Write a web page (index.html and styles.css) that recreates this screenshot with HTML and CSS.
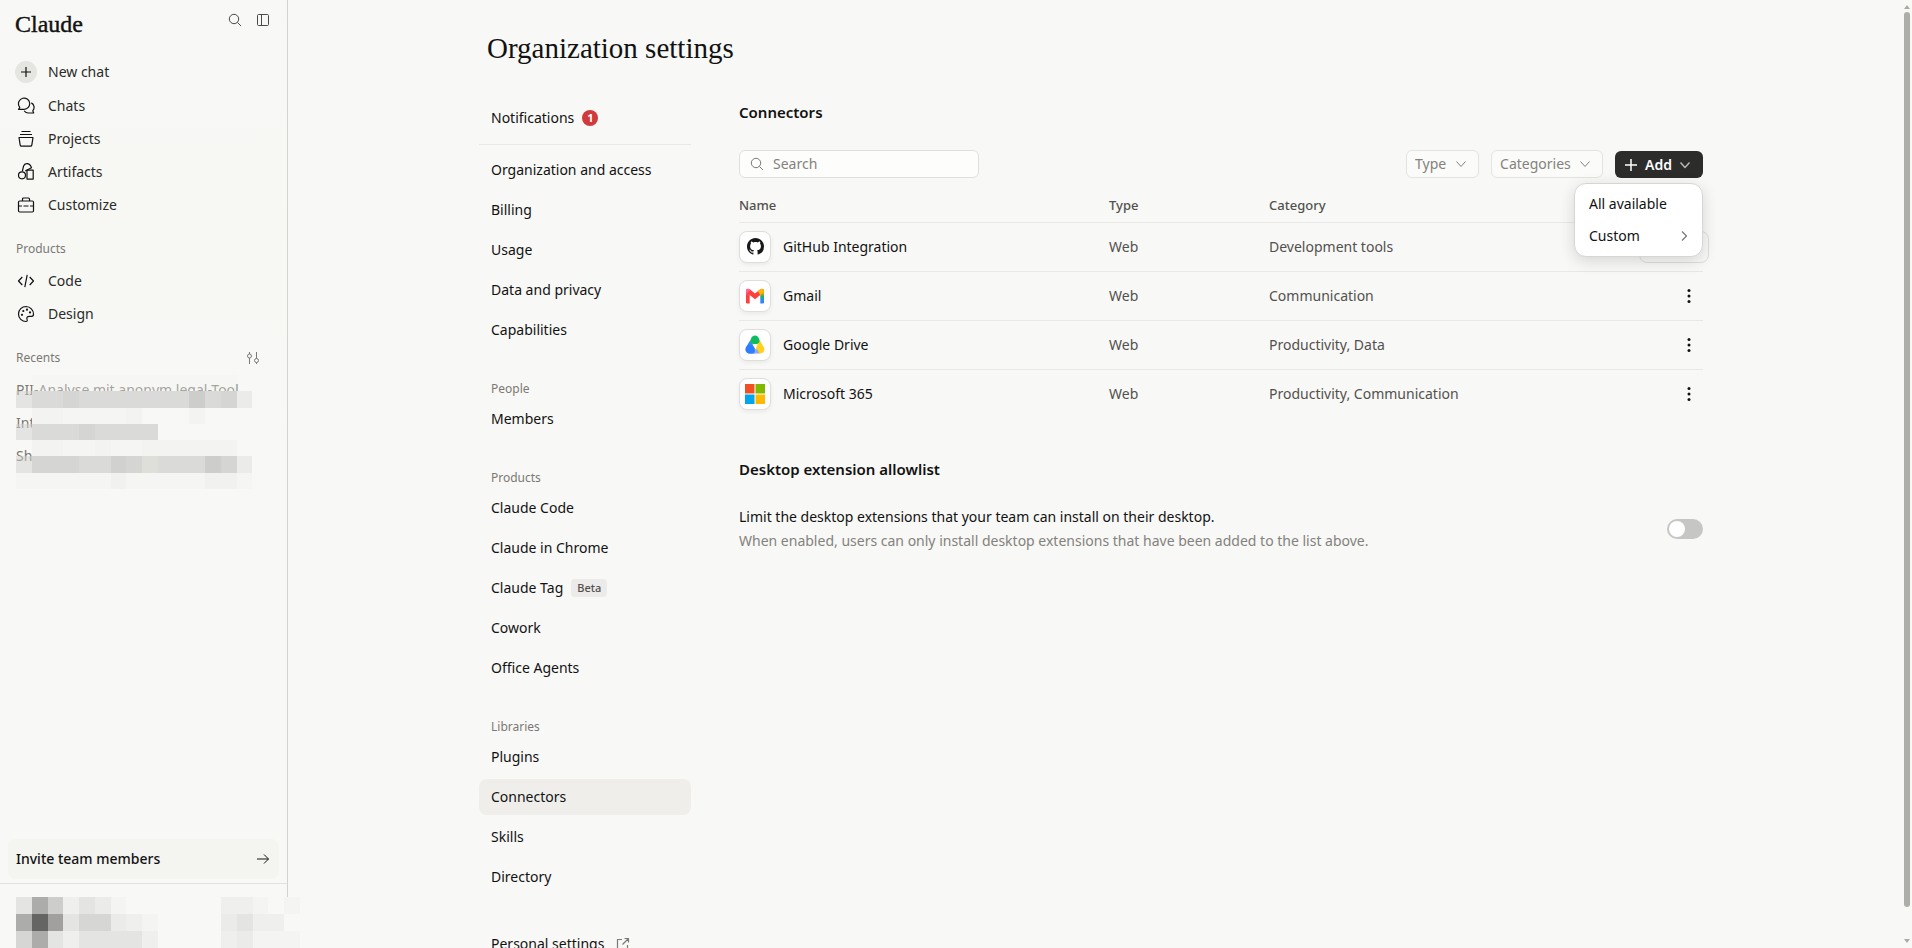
FILE: index.html
```html
<!DOCTYPE html>
<html lang="en">
<head>
  <meta charset="UTF-8" />
  <meta name="viewport" content="width=device-width, initial-scale=1.0" />
  <title>Organization settings - Claude</title>
  <link rel="stylesheet" href="styles.css">
</head>
<body>
  <div class="app">
    <aside class="sidebar">
      <div class="sidebar-main">
        <div class="sidebar-top">
          <a href="#" class="brand">Claude</a>
          <div class="top-actions">
            <button type="button" class="icon-btn" aria-label="Search">
              <svg width="14" height="14" viewBox="0 0 14 14"><circle cx="6" cy="6" r="4.7" /><path d="M9.4 9.4 13 13" /></svg>
            </button>
            <button type="button" class="icon-btn" aria-label="Toggle sidebar">
              <svg width="14" height="14" viewBox="0 0 14 14"><rect x="1.5" y="1.5" width="11" height="11" rx="1" /><path d="M5.5 1.5v11" /></svg>
            </button>
          </div>
        </div>

        <nav class="side-nav">
          <a href="#" class="new-chat">
            <span class="plus"><svg width="12" height="12" viewBox="0 0 12 12"><path d="M6 1v10M1 6h10" /></svg></span>
            New chat
          </a>
          <a href="#">
            <svg width="18" height="18" viewBox="0 0 18 18"><path d="M1.5 12.3h5.6a5.6 5.6 0 1 0-5.2-3.5l.9 1.700z" /><path d="M14.3 5.9a5 5 0 0 1 1.5 7.8l.9 2.3h-5a5 5 0 0 1-4.5-2.3" /></svg>
            Chats
          </a>
          <a href="#">
            <svg width="18" height="18" viewBox="0 0 18 18"><path d="M4.5 1.5h9M3 4.5h12M2 7.5h14l-1.2 7.7a1.2 1.2 0 0 1-1.2 1H4.4a1.2 1.2 0 0 1-1.2-1z" /></svg>
            Projects
          </a>
          <a href="#">
            <svg width="18" height="18" viewBox="0 0 18 18"><circle cx="5" cy="12.3" r="3.5" /><path d="M10 7.2h6.2v8.9H10z" /><path d="M5.3 8.4 6.6 3a3.8 3.8 0 0 1 6.9-.4l1 2.1L8.2 8" /></svg>
            Artifacts
          </a>
          <a href="#">
            <svg width="18" height="18" viewBox="0 0 18 18"><rect x="1.5" y="5" width="15" height="11" rx="1.2" /><path d="M5.5 5V3a1 1 0 0 1 1-1h5a1 1 0 0 1 1 1v2M1.5 10H5M6.500 10h5M13 10h3.500" /></svg>
            Customize
          </a>
        </nav>

        <h2 class="side-label">Products</h2>
        <nav class="side-nav">
          <a href="#">
            <svg width="18" height="18" viewBox="0 0 18 18"><path d="M5.300 5 1.500 9l3.800 4M12.700 5l3.800 4-3.800 4M10.200 2.800 7.800 15.200" /></svg>
            Code
          </a>
          <a href="#">
            <svg width="18" height="18" viewBox="0 0 18 18"><path d="M9 1.500a7.500 7.500 0 1 0 0 15c1.300 0 1.500-1 1-2.200-.6-1.700.4-3 2.200-3h2.500c1.200 0 1.800-.8 1.800-2A7.600 7.600 0 0 0 9 1.500z" /><g class="fill"><circle cx="5" cy="9.800" r="1.100" /><circle cx="6.300" cy="6" r="1.100" /><circle cx="10" cy="4.700" r="1.100" /><circle cx="13" cy="7.400" r="1.100" /></g></svg>
            Design
          </a>
        </nav>

        <div class="recents-head">
          <h2 class="side-label">Recents</h2>
          <button type="button" class="icon-btn muted" aria-label="Filter recents">
            <svg width="14" height="14" viewBox="0 0 14 14"><path d="M3.500 1v2M3.500 7v6M10.500 1v6.500M10.500 11.500v1.500" /><circle cx="3.500" cy="5" r="2" /><circle cx="10.500" cy="9.500" r="2" /></svg>
          </button>
        </div>
        <div class="recents">
          <a href="#">PII-Analyse mit anonym legal-Tool</a>
          <a href="#">Int</a>
          <a href="#">Sh</a>
          <svg class="mosaic" viewBox="0 0 16 7" preserveAspectRatio="none" aria-hidden="true">
            <path fill="#f3f3f1" fill-opacity=".35" d="M1 0h13v1H1z" />
            <path fill="#f3f3f1" d="M1 2h2v1H1zM7 2h1v1H7zM11 2h1v1h-1zM1 4h2v1H1zM5 4h1v1H5zM8 4h6v1H8z" />
            <path fill="#f1f1ef" d="M6 6h1v1H6zM12 6h2v1h-2z" />
            <path fill="#f5f5f3" d="M3 2h4v1H3zM3 4h2v1H3zM6 4h2v1H6zM0 6h6v1H0zM7 6h5v1H7zM14 6h1v1h-1z" />
            <path fill="#d0d0ce" fill-opacity=".5" d="M0 1h1v1H0zM0 3h1v1H0zM0 5h1v1H0z" />
            <path fill="#ebebe9" d="M14 1h1v1h-1zM14 5h1v1h-1z" />
            <path fill="#dadad8" d="M1 1h10v1H1zM12 1h1v1h-1zM1 3h8v1H1zM1 5h11v1H1z" />
            <path fill="#d5d5d3" d="M3 1h1v1H3zM13 1h1v1h-1zM4 3h1v1H4zM1 5h3v1H1zM7 5h1v1H7zM13 5h1v1h-1z" />
            <path fill="#cdcdcb" d="M11 1h1v1h-1zM12 5h1v1h-1z" />
            <path fill="#d1d1cf" d="M6 5h1v1H6z" />
            <path fill="#dedfd9" d="M8 5h1v1H8z" />
          </svg>
        </div>

        <a href="#" class="invite">
          Invite team members
          <svg width="14" height="14" viewBox="0 0 14 14"><path d="M1 7h11.500M8 2.500 12.500 7 8 11.500" /></svg>
        </a>
        <div class="side-divider"></div>
      </div>

      <div class="account">
        <svg viewBox="0 0 18 3" preserveAspectRatio="none" aria-hidden="true">
          <path fill="#f4f4f2" d="M6 0h1v1H6zM15 0h1v1h-1zM8 1h1v1H8zM15 2h3v1h-3zM17 0h1v1h-1z" />
          <path fill="#efefed" d="M3 0h1v1H3zM13 0h2v1h-2zM7 1h1v1H7zM15 1h2v1h-2zM3 2h1v1H3zM8 2h1v1H8zM13 2h1v1h-1z" />
          <path fill="#ebebe9" d="M5 0h1v1H5zM6 1h1v1H6zM13 1h1v1h-1zM14 2h1v1h-1z" />
          <path fill="#e4e4e2" d="M0 0h1v1H0zM4 0h1v1H4zM3 1h1v1H3zM14 1h1v1h-1zM2 2h1v1H2zM4 2h4v1H4z" />
          <path fill="#d6d6d4" d="M4 1h2v1H4zM0 2h1v1H0z" />
          <path fill="#cdcdcb" d="M2 0h1v1H2z" />
          <path fill="#acacaa" d="M1 0h1v1H1zM0 1h1v1H0zM1 2h1v1H1z" />
          <path fill="#a2a09e" d="M2 1h1v1H2z" />
          <path fill="#656563" d="M1 1h1v1H1z" />
        </svg>
      </div>
    </aside>

    <main class="page">
      <div class="container">
        <h1>Organization settings</h1>
        <div class="columns">
          <nav class="settings-nav">
            <a href="#">Notifications <span class="count">1</span></a>
            <hr>
            <a href="#">Organization and access</a>
            <a href="#">Billing</a>
            <a href="#">Usage</a>
            <a href="#">Data and privacy</a>
            <a href="#">Capabilities</a>
            <h2>People</h2>
            <a href="#">Members</a>
            <h2>Products</h2>
            <a href="#">Claude Code</a>
            <a href="#">Claude in Chrome</a>
            <a href="#">Claude Tag <span class="beta">Beta</span></a>
            <a href="#">Cowork</a>
            <a href="#">Office Agents</a>
            <h2>Libraries</h2>
            <a href="#">Plugins</a>
            <a href="#" class="active" aria-current="page">Connectors</a>
            <a href="#">Skills</a>
            <a href="#">Directory</a>
            <a href="#" class="personal">
              Personal settings
              <svg width="14" height="14" viewBox="0 0 14 14"><path d="M6 2.500H1.500v10h10V8M8.500 1.500h4v4M12.500 1.500 6.500 7.500" /></svg>
            </a>
          </nav>

          <section class="panel">
            <h2>Connectors</h2>
            <div class="toolbar">
              <div class="search">
                <svg width="14" height="14" viewBox="0 0 14 14"><circle cx="6" cy="6" r="4.700" /><path d="M9.400 9.400 13 13" /></svg>
                <input type="text" placeholder="Search" aria-label="Search connectors">
              </div>
              <div class="filters">
                <div class="select">
                  <select aria-label="Type"><option>Type</option></select>
                  <svg width="12" height="12" viewBox="0 0 12 12"><path d="M1.500 3.500 6 8.500l4.500-5" /></svg>
                </div>
                <div class="select">
                  <select aria-label="Categories"><option>Categories</option></select>
                  <svg width="12" height="12" viewBox="0 0 12 12"><path d="M1.500 3.500 6 8.500l4.500-5" /></svg>
                </div>
                <div class="add">
                  <button type="button" class="add-btn" aria-expanded="true">
                    <svg width="14" height="14" viewBox="0 0 14 14"><path d="M7 1v12M1 7h12" /></svg>
                    Add
                    <svg class="chevron" width="12" height="12" viewBox="0 0 12 12"><path d="M1.500 3.500 6 8.500l4.500-5" /></svg>
                  </button>
                  <div class="menu">
                    <button type="button">All available</button>
                    <button type="button">Custom
                      <svg width="12" height="12" viewBox="0 0 12 12"><path d="M4 1.500 8.500 6 4 10.500" /></svg>
                    </button>
                  </div>
                </div>
              </div>
            </div>

            <table>
              <thead>
                <tr><th class="col-name">Name</th><th class="col-type">Type</th><th>Category</th><th class="col-more"></th></tr>
              </thead>
              <tbody>
                <tr>
                  <td>
                    <div class="name">
                      <span class="logo"><svg width="17" height="17" viewBox="0 0 16 16"><path class="github" d="M8 0C3.580 0 0 3.580 0 8c0 3.540 2.290 6.530 5.470 7.590.4.070.55-.17.55-.38 0-.19-.01-.82-.01-1.490-2.010.37-2.530-.49-2.690-.94-.09-.23-.48-.94-.82-1.130-.28-.15-.68-.52-.01-.53.63-.01 1.080.58 1.230.82.72 1.210 1.870.87 2.330.66.07-.52.28-.87.51-1.070-1.780-.2-3.640-.89-3.640-3.950 0-.87.31-1.590.82-2.150-.08-.2-.36-1.020.08-2.120 0 0 .67-.21 2.200.82.64-.18 1.320-.27 2-.27s1.360.09 2 .27c1.530-1.040 2.200-.82 2.200-.82.44 1.100.16 1.920.08 2.120.51.56.82 1.270.82 2.150 0 3.070-1.870 3.750-3.650 3.950.29.25.54.73.54 1.480 0 1.070-.01 1.930-.01 2.200 0 .21.15.46.55.38A8.010 8.010 0 0 0 16 8c0-4.420-3.580-8-8-8z" /></svg></span>
                      GitHub Integration
                    </div>
                  </td>
                  <td>Web</td>
                  <td>Development tools</td>
                  <td class="col-more"><button type="button" class="connect" aria-label="Connect"></button></td>
                </tr>
                <tr>
                  <td>
                    <div class="name">
                      <span class="logo"><svg class="solid" width="20" height="16" viewBox="0 0 20 16">
                        <defs>
                          <linearGradient id="gm-left" x1="0" y1="0" x2="0" y2="1"><stop offset="0" stop-color="#ff63a0" /><stop offset=".4" stop-color="#fc413d" /></linearGradient>
                          <linearGradient id="gm-right" x1="0" y1="0" x2="0" y2="1"><stop offset=".1" stop-color="#ffb800" /><stop offset=".45" stop-color="#18b45a" /><stop offset=".7" stop-color="#3186ff" /></linearGradient>
                        </defs>
                        <path fill="url(#gm-left)" d="M1 2.800h3.700V15.500H2.200A1.200 1.200 0 0 1 1 14.300z" />
                        <path fill="url(#gm-right)" d="M15.300 2.800H19v11.500a1.200 1.200 0 0 1-1.200 1.200h-2.500z" />
                        <path fill="#fc413d" d="M1 2.800C1 .8 3.100.1 4.700 1.300L10 5.600l5.300-4.300C16.900.1 19 .8 19 2.800c0 .8-.3 1.400-.9 1.900L10 11.200 1.900 4.700C1.300 4.200 1 3.600 1 2.800z" />
                        <path fill="#ff63a0" d="M1 2.800C1 .8 3.100.1 4.700 1.300L5.500 2 2.300 5 1 4z" />
                        <path fill="#ffb800" d="M15.300 1.300C16.900.1 19 .8 19 2.800c0 .8-.3 1.400-.9 1.900L15.300 7 12.800 3.300z" />
                      </svg></span>
                      Gmail
                    </div>
                  </td>
                  <td>Web</td>
                  <td>Communication</td>
                  <td class="col-more"><button type="button" class="more" aria-label="More options"><svg width="4" height="16" viewBox="0 0 4 16"><circle cx="2" cy="2.500" r="1.500" /><circle cx="2" cy="8" r="1.500" /><circle cx="2" cy="13.500" r="1.500" /></svg></button></td>
                </tr>
                <tr>
                  <td>
                    <div class="name">
                      <span class="logo"><svg class="solid" width="20" height="19" viewBox="0 0 20 19">
                        <defs>
                          <linearGradient id="dr-blue" x1="0" y1="1" x2="1" y2="0"><stop offset=".5" stop-color="#2f7dff" /><stop offset="1" stop-color="#4cc8d8" /></linearGradient>
                        </defs>
                        <path fill="url(#dr-blue)" d="M5.300 5 1 12.500c-1.300 3 .5 6 3.700 6H10l1.500-2.500L7 8z" />
                        <path fill="#ffd21e" d="M14.700 5 19 12.500c1.300 3-.5 6-3.700 6H14a4 4 0 0 1-3.500-4L13 8z" />
                        <path fill="#8fa8ff" d="M7 14.500h5.500l2 4H8z" />
                        <path fill="#2f7dff" d="M1 12.500C2 9.500 6 9 7.700 11.500l2 3.500c.8 2-1 3.500-2.700 3.500H4.700c-3.200 0-5-3-3.700-6z" />
                        <path fill="#0ebc5f" d="M5.700 4.500C7-.9 13-.9 14.300 4.500 15.200 7 13.500 9.200 11.500 9.200h-3C6.500 9.200 4.800 7 5.700 4.500z" />
                        <path fill="#fff" d="M7.700 9.300h4.800l-2.400 4.500z" />
                      </svg></span>
                      Google Drive
                    </div>
                  </td>
                  <td>Web</td>
                  <td>Productivity, Data</td>
                  <td class="col-more"><button type="button" class="more" aria-label="More options"><svg width="4" height="16" viewBox="0 0 4 16"><circle cx="2" cy="2.500" r="1.500" /><circle cx="2" cy="8" r="1.500" /><circle cx="2" cy="13.500" r="1.500" /></svg></button></td>
                </tr>
                <tr>
                  <td>
                    <div class="name">
                      <span class="logo"><svg class="solid" width="20" height="20" viewBox="0 0 20 20"><path fill="#f25022" d="M0 0h9.500v9.500H0z" /><path fill="#7fba00" d="M10.500 0H20v9.500h-9.500z" /><path fill="#00a4ef" d="M0 10.500h9.500V20H0z" /><path fill="#ffb900" d="M10.500 10.500H20V20h-9.500z" /></svg></span>
                      Microsoft 365
                    </div>
                  </td>
                  <td>Web</td>
                  <td>Productivity, Communication</td>
                  <td class="col-more"><button type="button" class="more" aria-label="More options"><svg width="4" height="16" viewBox="0 0 4 16"><circle cx="2" cy="2.500" r="1.500" /><circle cx="2" cy="8" r="1.500" /><circle cx="2" cy="13.500" r="1.500" /></svg></button></td>
                </tr>
              </tbody>
            </table>

            <h2 class="allowlist-title">Desktop extension allowlist</h2>
            <div class="setting">
              <div>
                <label for="allowlist">Limit the desktop extensions that your team can install on their desktop.</label>
                <p>When enabled, users can only install desktop extensions that have been added to the list above.</p>
              </div>
              <input type="checkbox" id="allowlist" class="switch" role="switch">
            </div>
          </section>
        </div>
      </div>
    </main>

    <div class="scrollbar" aria-hidden="true">
      <svg width="6" height="4" viewBox="0 0 6 4"><path d="M3 0 6 4H0z" /></svg>
      <div class="track"><div class="thumb"></div></div>
      <svg width="6" height="4" viewBox="0 0 6 4"><path d="M0 0h6L3 4z" /></svg>
    </div>
  </div>
</body>
</html>
```

FILE: styles.css
```css
* {
  box-sizing: border-box;
}

body {
  margin: 0;
  font-family: "Noto Sans", sans-serif;
  font-size: 14px;
  line-height: 20px;
  color: #121212;
  background-color: #f8f8f6;
}

h1, h2, p {
  margin: 0;
}

a {
  color: inherit;
  text-decoration: none;
}

button, input, select {
  font: inherit;
  color: inherit;
}

button {
  padding: 0;
  border: none;
  background: none;
  cursor: pointer;
}

svg {
  display: block;
  flex-shrink: 0;
  fill: none;
  stroke: currentColor;
  stroke-width: 1.2;
  stroke-linejoin: round;
}

.app {
  display: flex;
  height: 100vh;
  overflow: hidden;
}

/* Sidebar */
.sidebar {
  display: flex;
  flex-direction: column;
  flex-shrink: 0;
  width: 288px;
}

.sidebar-main {
  display: flex;
  flex-direction: column;
  flex: 1;
  padding-bottom: 13px;
  border-right: 1px solid #d3d3d0;
  background: linear-gradient(#f8f8f6, #f7f8f4 25%, #f8f8f6 50%);
}

.sidebar-top {
  display: flex;
  justify-content: space-between;
  padding: 8px 17px 0 15px;
  height: 55px;
}

.brand {
  font-family: "Liberation Serif", serif;
  font-size: 24px;
  line-height: 32px;
  -webkit-text-stroke: 0.4px currentColor;
}

.top-actions {
  display: flex;
  align-items: center;
  gap: 14px;
  height: 24px;
}

.icon-btn {
  color: #4a4a48;
}

.icon-btn svg,
.search svg,
.select svg,
.invite svg {
  stroke-width: 1;
}

.icon-btn.muted {
  color: #7b7974;
}

.side-nav a {
  display: flex;
  align-items: center;
  gap: 13px;
  height: 33px;
  padding-left: 17px;
  color: #2b2b29;
}

.side-nav a svg {
  color: #121212;
}

.side-nav .new-chat {
  gap: 11px;
  padding-left: 15px;
  margin-bottom: 1px;
}

.plus {
  display: grid;
  place-items: center;
  width: 22px;
  height: 22px;
  border-radius: 50%;
  background-color: #e5e5e2;
}

.fill {
  fill: currentColor;
  stroke: none;
}

.side-label {
  margin: 18px 0 5px 16px;
  font-size: 12px;
  line-height: 20px;
  font-weight: 400;
  color: #7b7974;
}

.recents-head {
  display: flex;
  justify-content: space-between;
  align-items: center;
  padding-right: 27px;
}

.recents-head .icon-btn {
  margin-top: 12px;
}

.recents {
  position: relative;
  padding-left: 16px;
}

.recents a {
  display: block;
  height: 33px;
  line-height: 33px;
  color: #7b7974;
  white-space: nowrap;
}

.mosaic {
  position: absolute;
  top: 2px;
  left: 16px;
  width: 252px;
  height: 114px;
  stroke: none;
  shape-rendering: crispEdges;
}

.invite {
  display: flex;
  justify-content: space-between;
  align-items: center;
  height: 40px;
  margin: auto 8px 4px;
  padding: 0 9px 0 8px;
  border-radius: 8px;
  font-weight: 500;
  background-color: #f4f4f0;
}

.side-divider {
  height: 1px;
  background-color: #e2e2df;
}

.account {
  height: 51px;
  padding-left: 16px;
}

.account svg {
  width: 284px;
  height: 51px;
  stroke: none;
  shape-rendering: crispEdges;
}

/* Settings page */
.page {
  flex: 1;
  min-width: 0;
  overflow: hidden;
}

.container {
  max-width: 1232px;
  margin: 0 auto;
  padding: 32px 8px 0;
}

h1 {
  font-family: "Liberation Serif", serif;
  font-size: 29px;
  line-height: 32px;
  font-weight: 400;
}

.columns {
  display: flex;
  gap: 48px;
  margin-top: 36px;
}

.settings-nav {
  display: flex;
  flex-direction: column;
  gap: 4px;
  flex-shrink: 0;
  width: 212px;
  margin-left: -8px;
}

.settings-nav a {
  display: flex;
  align-items: center;
  gap: 8px;
  height: 36px;
  padding: 0 12px;
  border-radius: 8px;
}

.settings-nav a.active {
  background-color: #efeeeb;
}

.settings-nav hr {
  width: 100%;
  margin: 4px 0 3px;
  border: none;
  border-top: 1px solid #e8e8e5;
}

.settings-nav h2 {
  margin-top: 28px;
  padding-left: 12px;
  font-size: 12px;
  line-height: 17px;
  font-weight: 400;
  color: #7b7974;
}

.settings-nav a.personal {
  gap: 12px;
  margin-top: 27px;
}

.personal svg {
  color: #7b7974;
}

.count {
  width: 16px;
  border-radius: 8px;
  font-size: 11px;
  line-height: 16px;
  font-weight: 700;
  text-align: center;
  color: #fff;
  background-color: #d03a3a;
}

.beta {
  padding: 0 6px;
  border-radius: 4px;
  font-size: 11px;
  line-height: 18px;
  font-weight: 500;
  color: #52514e;
  background-color: #ecebe9;
}

.panel {
  flex: 1;
  min-width: 0;
}

.panel h2 {
  padding-top: 2px;
  font-size: 15px;
  line-height: 20px;
  font-weight: 600;
}

.toolbar {
  display: flex;
  justify-content: space-between;
  margin-top: 28px;
}

.search {
  display: flex;
  align-items: center;
  gap: 9px;
  width: 240px;
  height: 28px;
  padding: 0 10px;
  border: 1px solid #dfdfdc;
  border-radius: 6px;
  color: #7b7974;
  background-color: #fdfdfb;
}

.search input {
  width: 100%;
  padding: 0;
  border: none;
  outline: none;
  background: none;
}

.search input::placeholder {
  color: #84827d;
}

.filters {
  display: flex;
  gap: 12px;
}

.select {
  position: relative;
  color: #84827d;
}

.select select {
  height: 28px;
  padding: 0 31px 0 8px;
  border: 1px solid #e3e3e0;
  border-radius: 6px;
  appearance: none;
  background-color: #fbfbf9;
}

.select svg {
  position: absolute;
  top: 8px;
  right: 12px;
  pointer-events: none;
}

.add {
  position: relative;
}

.add-btn {
  display: flex;
  align-items: center;
  gap: 7px;
  height: 27px;
  margin-top: 1px;
  padding: 0 12px 0 9px;
  border-radius: 6px;
  font-weight: 600;
  color: #fff;
  background-color: #2c2c2a;
}

.add-btn svg {
  stroke-width: 1.5;
}

.add-btn .chevron {
  color: #b5b5b2;
}

.menu {
  position: absolute;
  z-index: 1;
  top: 33px;
  right: 0;
  width: 129px;
  padding: 4px;
  border: 1px solid #d6d6d3;
  border-radius: 12px;
  background-color: #fff;
  box-shadow: 0 4px 16px rgba(0, 0, 0, 0.14);
}

.menu button {
  display: flex;
  justify-content: space-between;
  align-items: center;
  width: 100%;
  height: 32px;
  padding: 0 8px 0 10px;
}

.menu svg {
  color: #7b7974;
}

table {
  width: 100%;
  margin-top: 11px;
  border-collapse: collapse;
  table-layout: fixed;
}

th {
  height: 33px;
  padding: 0;
  font-size: 13px;
  font-weight: 500;
  text-align: left;
  color: #52514e;
  border-bottom: 1px solid #e8e8e5;
}

.col-name {
  width: 370px;
}

.col-type {
  width: 160px;
}

.col-more {
  width: 80px;
}

td {
  height: 49px;
  padding: 0;
  color: #52514e;
  border-bottom: 1px solid #e8e8e5;
}

tr:last-child td {
  border-bottom: none;
}

.name {
  display: flex;
  align-items: center;
  gap: 12px;
  color: #121212;
}

.logo {
  display: grid;
  place-items: center;
  width: 32px;
  height: 32px;
  border: 1px solid #dededb;
  border-radius: 8px;
  background-color: #fff;
  box-shadow: 0 2px 4px rgba(0, 0, 0, 0.06);
}

.logo svg {
  stroke: none;
}

.github {
  fill: #191717;
}

td.col-more {
  text-align: right;
}

.connect {
  display: block;
  width: 70px;
  height: 32px;
  margin: 0 -6px 0 auto;
  border: 1px solid #dededb;
  border-radius: 8px;
}

.more {
  padding: 4px 12px;
  vertical-align: middle;
}

.more svg {
  fill: #121212;
  stroke: none;
}

.panel .allowlist-title {
  margin-top: 39px;
}

.setting {
  display: flex;
  justify-content: space-between;
  align-items: center;
  margin-top: 26px;
}

.setting label {
  display: block;
  line-height: 24px;
}

.setting p {
  line-height: 24px;
  color: #84827d;
}

.switch {
  flex-shrink: 0;
  width: 36px;
  height: 20px;
  margin: 0;
  padding: 2px;
  border-radius: 10px;
  appearance: none;
  background-color: #c6c6c4;
}

.switch::before {
  content: "";
  display: block;
  width: 16px;
  height: 16px;
  border-radius: 50%;
  background-color: #fff;
}

.switch:checked {
  background-color: #2c84db;
}

.switch:checked::before {
  margin-left: 16px;
}

/* Page scrollbar */
.scrollbar {
  display: flex;
  flex-direction: column;
  width: 10px;
  padding: 5px 2px;
}

.scrollbar svg {
  fill: #a9a9a6;
  stroke: none;
}

.track {
  flex: 1;
  padding: 3px 0 32px;
}

.thumb {
  height: 100%;
  border-radius: 3px;
  background-color: #adadaa;
}
```
